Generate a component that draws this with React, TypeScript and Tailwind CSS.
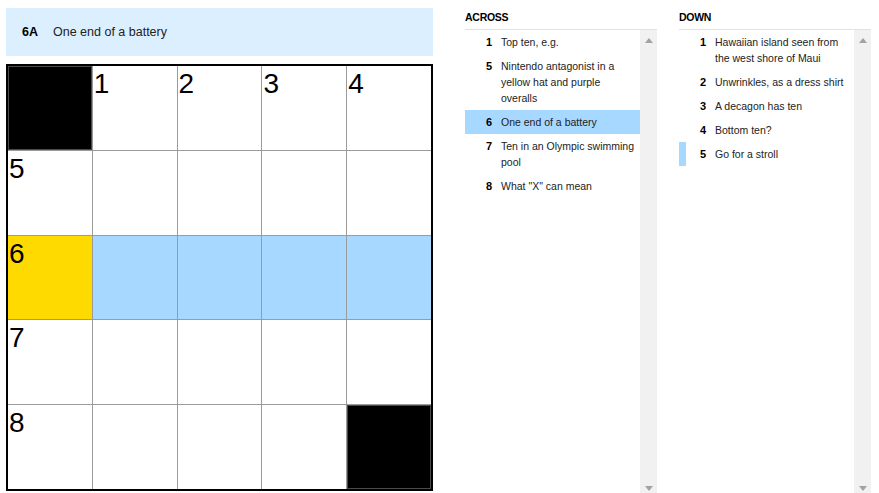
import React from "react";

type Clue = { num: number; text: string; active?: boolean; cross?: boolean };

const across: Clue[] = [
  { num: 1, text: "Top ten, e.g." },
  { num: 5, text: "Nintendo antagonist in a yellow hat and purple overalls" },
  { num: 6, text: "One end of a battery", active: true },
  { num: 7, text: "Ten in an Olympic swimming pool" },
  { num: 8, text: 'What "X" can mean' },
];

const down: Clue[] = [
  { num: 1, text: "Hawaiian island seen from the west shore of Maui" },
  { num: 2, text: "Unwrinkles, as a dress shirt" },
  { num: 3, text: "A decagon has ten" },
  { num: 4, text: "Bottom ten?" },
  { num: 5, text: "Go for a stroll", cross: true },
];

// null = black square, number = label, "" = empty white
const cells: (number | string | null)[] = [
  null, 1, 2, 3, 4,
  5, "", "", "", "",
  6, "", "", "", "",
  7, "", "", "", "",
  8, "", "", "", null,
];

function Arrow({ up }: { up?: boolean }) {
  return (
    <svg width="8" height="5" viewBox="0 0 8 5">
      <polygon
        points={up ? "0,5 8,5 4,0" : "0,0 8,0 4,5"}
        fill="#a3a3a3"
      />
    </svg>
  );
}

function ClueList({ title, clues }: { title: string; clues: Clue[] }) {
  return (
    <div className="w-[192px] flex flex-col">
      <div className="h-[30px] pt-[7px] flex items-center border-b border-[#e2e2e2] text-[10.5px] font-bold tracking-tight text-black">
        {title}
      </div>
      <div className="flex h-[463px]">
        <ul className="flex-1">
          {clues.map((c) => (
            <li
              key={c.num}
              className={`flex py-1 border-l-[7px] leading-[16px] text-[10.5px] ${
                c.active ? "bg-[#a7d8ff] border-[#a7d8ff]" : c.cross ? "border-[#a7d8ff]" : "border-transparent"
              }`}
            >
              <span className="w-[20px] text-right font-bold text-[11px] text-black">{c.num}</span>
              <span className="ml-[9px] pr-[4px] flex-1 text-[#222]">{c.text}</span>
            </li>
          ))}
        </ul>
        <div className="w-[17px] bg-[#f1f1f1] flex flex-col items-center justify-between pt-[8px] pb-[2px]">
          <Arrow up />
          <Arrow />
        </div>
      </div>
    </div>
  );
}

export default function App() {
  return (
    <div
      className="flex w-[879px] h-[493px] overflow-hidden bg-white"
      style={{ fontFamily: "'Liberation Sans', Arial, sans-serif" }}
    >
      <div className="ml-[6px] pt-[8px] w-[427px] flex flex-col">
        <div className="h-[48px] bg-[#dcefff] flex items-center pl-[16px] text-[12.5px]">
          <span className="font-bold text-black w-[31px]">6A</span>
          <span className="text-[#222]">One end of a battery</span>
        </div>
        <div className="mt-[8px] w-[427px] h-[427px] border-2 border-black bg-[#9b9b9b] grid grid-cols-5 grid-rows-5 gap-px">
          {cells.map((c, i) => {
            const row = Math.floor(i / 5);
            const col = i % 5;
            let bg = "bg-white";
            if (c === null) bg = "bg-black shadow-[inset_0_0_0_1px_#4a4a4a]";
            else if (row === 2 && col === 0) bg = "bg-[#ffda00]";
            else if (row === 2) bg = "bg-[#a7d8ff]";
            return (
              <div key={i} className={`${bg} relative`}>
                {typeof c === "number" && (
                  <span className="absolute left-[1px] top-[3px] text-[28px] leading-[30px] text-black">
                    {c}
                  </span>
                )}
              </div>
            );
          })}
        </div>
      </div>
      <div className="ml-[32px] flex gap-[22px]">
        <ClueList title="ACROSS" clues={across} />
        <ClueList title="DOWN" clues={down} />
      </div>
    </div>
  );
}
